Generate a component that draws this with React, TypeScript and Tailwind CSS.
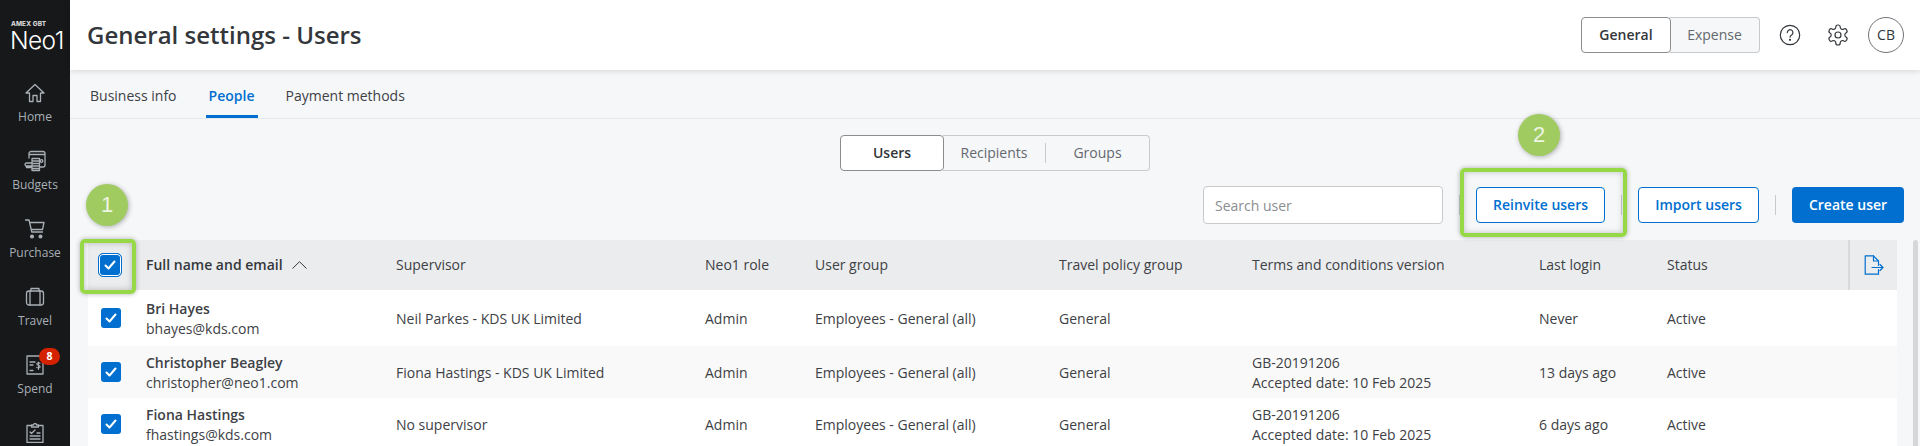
import React from "react";

function NavIcon({ name }: { name: string }) {
  const common = {
    fill: "none",
    stroke: "#a9afb5",
    strokeWidth: 1.3,
    strokeLinejoin: "round" as const,
    strokeLinecap: "round" as const,
  };
  if (name === "Home")
    return (
      <svg width="20" height="20" viewBox="0 0 20 20" {...common}>
        <path d="M1 10 10 1.500 19 10h-3.500v8.500h-3.500v-6h-4v6H4.500V10z" />
      </svg>
    );
  if (name === "Budgets")
    return (
      <svg width="22" height="22" viewBox="0 0 22 22" {...common}>
        <path d="M5 8V3.500a2 2 0 0 1 2-2h12a2 2 0 0 1 2 2V15a2 2 0 0 1-2 2h-3M5 4.500h16" />
        <circle cx="17.500" cy="11" r="1.300" />
        <path d="M8 8.500h7.500V20.500H8zM8 11h7.500M8 13.500h7.500M8 16h7.500M8 18.500h7.500M8 13H2.500a1.500 1.500 0 0 0 0 3H8M8 16H2.500a1.500 1.500 0 0 0 0 1.500H8" />
      </svg>
    );
  if (name === "Purchase")
    return (
      <svg width="20" height="20" viewBox="0 0 20 20" {...common}>
        <path d="M.5 1H4l2.800 12h10.700M4.600 3.500h14.400l-1.500 7H6.200" />
        <circle cx="7" cy="17.500" r="1.400" fill="#a9afb5" />
        <circle cx="15.500" cy="17.500" r="1.400" fill="#a9afb5" />
      </svg>
    );
  if (name === "Travel")
    return (
      <svg width="20" height="20" viewBox="0 0 20 20" {...common}>
        <rect x="1.500" y="4" width="17" height="14" rx="2.500" />
        <path d="M6 4V1.500h8V4M5 4v14M15 4v14" />
      </svg>
    );
  if (name === "Spend")
    return (
      <svg width="18" height="20" viewBox="0 0 18 20" {...common}>
        <path d="M1 1h16v18H1zM4 7h5M4 10h3" />
        <path d="M14 8.500c-.5-1-3.200-1-3.200.6 0 1.700 3.300.9 3.300 2.700 0 1.600-2.800 1.500-3.400.5M12.500 7v7.500" strokeWidth="1.100" />
        <path d="M4 15.500h3" />
      </svg>
    );
  return (
    <svg width="18" height="20" viewBox="0 0 18 20" {...common}>
      <path d="M5.500 2.500H1v17h16v-17h-4.500M5.500 4V2h2a1.500 1.500 0 0 1 3 0h2v2z" />
      <path d="M4 9l1.500 1.500L9 7M4 13h10M4 16h10M11 10h3" />
    </svg>
  );
}

const nav = ["Home", "Budgets", "Purchase", "Travel", "Spend", "Approvals"];

function Check({ focus = false }: { focus?: boolean }) {
  return (
    <span
      className={
        focus
          ? "flex h-[24px] w-[24px] items-center justify-center rounded-[5px] border border-[#006fcf] bg-[#006fcf] shadow-[inset_0_0_0_1px_#ffffff]"
          : "flex h-[20px] w-[20px] items-center justify-center rounded-[3px] bg-[#006fcf]"
      }
    >
      <svg width="12" height="10" viewBox="0 0 12 10" fill="none" stroke="#fff" strokeWidth="2" strokeLinecap="round" strokeLinejoin="round">
        <path d="M1.500 5.500 4.500 8.500 10.500 1.500" />
      </svg>
    </span>
  );
}

const cols =
  "grid grid-cols-[58px_250px_309px_110px_244px_193px_287px_128px_181px_49px] items-center";

const rows = [
  {
    name: "Bri Hayes",
    email: "bhayes@kds.com",
    sup: "Neil Parkes - KDS UK Limited",
    terms: null,
    login: "Never",
    h: "h-[56px] bg-white",
  },
  {
    name: "Christopher Beagley",
    email: "christopher@neo1.com",
    sup: "Fiona Hastings - KDS UK Limited",
    terms: "10 Feb 2025",
    login: "13 days ago",
    h: "h-[52px] bg-[#f9f9f9]",
  },
  {
    name: "Fiona Hastings",
    email: "fhastings@kds.com",
    sup: "No supervisor",
    terms: "10 Feb 2025",
    login: "6 days ago",
    h: "h-[52px] bg-white",
  },
];

export default function App() {
  return (
    <div className="relative flex h-[446px] w-[1920px] overflow-hidden bg-[#f6f7f9] font-['Open_Sans',sans-serif] text-[14px] leading-[20px] text-[#3d4145]">
      <aside className="flex w-[70px] shrink-0 flex-col items-center bg-[#16181a]">
        <div className="flex h-[70px] w-full shrink-0 flex-col pl-[10px] pt-[20px] font-['Inter',sans-serif] text-white">
          <span className="pl-px text-[6.500px] font-bold leading-[9px] tracking-[0.1px] text-[#e4e4e4]">AMEX GBT</span>
          <span className="mt-[-1px] text-[24.500px] font-light leading-[24px] tracking-[-0.6px]">Neo1</span>
        </div>
        <div className="shrink-0 pt-[12px]">
          {nav.map((n) => (
            <div key={n} className="relative flex h-[68px] w-[70px] flex-col items-center">
              <span className="flex h-[22px] items-center justify-center">
                <NavIcon name={n} />
              </span>
              <span className="mt-[5px] text-[12px] leading-[16px] text-[#a9afb5]">{n === "Approvals" ? "" : n}</span>
              {n === "Spend" && (
                <span className="absolute left-[39px] top-[-6px] flex h-[17px] w-[21px] items-center justify-center rounded-full bg-[#d42200] text-[10.500px] font-bold leading-none text-white">
                  8
                </span>
              )}
            </div>
          ))}
        </div>
      </aside>

      <main className="flex min-w-0 flex-1 flex-col">
        <header className="relative z-10 flex h-[70px] shrink-0 items-center justify-between bg-white pl-[17px] pr-[16px] shadow-[0_1px_6px_rgba(0,0,0,0.14)]">
          <h1 className="text-[24px] font-semibold leading-[32px] text-[#33373b]">General settings - Users</h1>
          <div className="flex items-center">
            <div className="flex h-[36px] text-[14px]">
              <span className="z-10 flex w-[90px] items-center justify-center rounded-[4px] border border-[#8a8d90] bg-white font-semibold text-[#33373b]">General</span>
              <span className="ml-[-1px] flex w-[90px] items-center justify-center rounded-r-[4px] border border-l-0 border-[#c8cacc] bg-[#f6f7f9] text-[#63686d]">Expense</span>
            </div>
            <svg className="ml-[19px]" width="22" height="22" viewBox="0 0 22 22" fill="none" stroke="#33373b" strokeWidth="1.200" strokeLinecap="round">
              <circle cx="11" cy="11" r="9.700" />
              <path d="M8.300 8.600a2.800 2.800 0 1 1 4.300 2.300c-1 .6-1.600 1.100-1.600 2.300" />
              <circle cx="11" cy="15.800" r=".5" fill="#33373b" />
            </svg>
            <svg className="ml-[25px]" width="24" height="24" viewBox="0 0 24 24" fill="none" stroke="#33373b" strokeWidth="1.200" strokeLinecap="round" strokeLinejoin="round">
              <path d="M12.220 2h-.44a2 2 0 0 0-2 2v.18a2 2 0 0 1-1 1.730l-.43.250a2 2 0 0 1-2 0l-.150-.08a2 2 0 0 0-2.730.730l-.220.380a2 2 0 0 0 .730 2.730l.150.100a2 2 0 0 1 1 1.720v.510a2 2 0 0 1-1 1.740l-.150.090a2 2 0 0 0-.730 2.730l.220.380a2 2 0 0 0 2.730.730l.150-.080a2 2 0 0 1 2 0l.430.250a2 2 0 0 1 1 1.730V20a2 2 0 0 0 2 2h.44a2 2 0 0 0 2-2v-.18a2 2 0 0 1 1-1.730l.430-.250a2 2 0 0 1 2 0l.150.080a2 2 0 0 0 2.730-.730l.220-.390a2 2 0 0 0-.730-2.730l-.150-.080a2 2 0 0 1-1-1.740v-.500a2 2 0 0 1 1-1.740l.150-.090a2 2 0 0 0 .730-2.730l-.220-.380a2 2 0 0 0-2.730-.730l-.150.080a2 2 0 0 1-2 0l-.430-.250a2 2 0 0 1-1-1.730V4a2 2 0 0 0-2-2z" />
              <circle cx="12" cy="12" r="3" />
            </svg>
            <span className="ml-[18px] flex h-[36px] w-[36px] items-center justify-center rounded-full border border-[#6e7378] font-medium text-[#33373b]">CB</span>
          </div>
        </header>

        <nav className="flex h-[49px] shrink-0 items-end gap-[25px] border-b border-[#e6e8eb] pl-[16px]">
          <span className="flex h-[45px] items-center px-[4px]">Business info</span>
          <span className="flex h-[45px] w-[52px] items-center justify-center border-b-[3px] border-[#006fcf] pt-[3px] font-semibold text-[#006fcf]">People</span>
          <span className="ml-[-1px] flex h-[45px] items-center px-[4px]">Payment methods</span>
        </nav>

        <div className="flex shrink-0 justify-center pt-[16px]">
          <div className="flex h-[36px] rounded-[4px] text-[14px]">
            <span className="z-10 flex w-[104px] items-center justify-center rounded-[4px] border border-[#8a8d90] bg-white font-semibold text-[#33373b]">Users</span>
            <div className="ml-[-1px] flex items-center rounded-r-[4px] border border-l-0 border-[#c8cacc] text-[#63686d]">
              <span className="flex h-[20px] w-[103px] items-center justify-center border-r border-[#c8cacc]">Recipients</span>
              <span className="flex w-[103px] items-center justify-center">Groups</span>
            </div>
          </div>
        </div>

        <div className="mt-[15px] flex h-[38px] shrink-0 items-center justify-end pr-[16px]">
          <input
            readOnly
            placeholder="Search user"
            className="h-[38px] w-[240px] rounded-[4px] border border-[#c8cacc] bg-white px-[11px] text-[14px] outline-none placeholder:text-[#8a8d90]"
          />
          <span className="mx-[16px] h-[20px] w-px bg-[#c8cacc]" />
          <button className="h-[36px] w-[129px] rounded-[4px] border border-[#006fcf] bg-white font-semibold text-[#006fcf]">Reinvite users</button>
          <span className="mx-[16px] h-[20px] w-px bg-[#c8cacc]" />
          <button className="h-[36px] w-[121px] rounded-[4px] border border-[#006fcf] bg-white font-semibold text-[#006fcf]">Import users</button>
          <span className="mx-[16px] h-[20px] w-px bg-[#c8cacc]" />
          <button className="h-[36px] w-[112px] rounded-[4px] bg-[#006fcf] font-semibold text-white">Create user</button>
        </div>

        <div className="mt-[16px] flex min-h-0 flex-1 pl-[18px]">
          <div className="w-[1809px] shrink-0">
            <div className={`${cols} h-[50px] bg-[#ebecee]`}>
              <span className="flex pl-[10px]">
                <Check focus />
              </span>
              <span className="flex items-center font-semibold text-[#33373b]">
                Full name and email
                <svg className="ml-[9px]" width="15" height="8" viewBox="0 0 15 8" fill="none" stroke="#33373b" strokeWidth="1">
                  <path d="M.5 7.500 7.500.7l7 6.800" />
                </svg>
              </span>
              <span>Supervisor</span>
              <span>Neo1 role</span>
              <span>User group</span>
              <span>Travel policy group</span>
              <span>Terms and conditions version</span>
              <span>Last login</span>
              <span>Status</span>
              <span className="flex h-[50px] items-center border-l-2 border-[#d7d9db] pl-[14px]">
                <svg width="20" height="20" viewBox="0 0 20 20" fill="none" stroke="#006fcf" strokeWidth="1.200" strokeLinejoin="round" strokeLinecap="round">
                  <path d="M14.500 10.500V6L9.500.8H1.200v18.400h13.300V14.500" />
                  <path d="M9.500.8V6h5M8 12.500h11M16 9.500l3 3-3 3" />
                </svg>
              </span>
            </div>
            {rows.map((r) => (
              <div key={r.name} className={`${cols} ${r.h} pt-[2px]`}>
                <span className="mt-[-2px] flex pl-[13px]">
                  <Check />
                </span>
                <span className="flex flex-col">
                  <span className="font-semibold text-[#3d4145]">{r.name}</span>
                  <span>{r.email}</span>
                </span>
                <span>{r.sup}</span>
                <span>Admin</span>
                <span>Employees - General (all)</span>
                <span>General</span>
                <span className="flex flex-col">
                  {r.terms && (
                    <>
                      <span>GB-20191206</span>
                      <span>Accepted date: {r.terms}</span>
                    </>
                  )}
                </span>
                <span>{r.login}</span>
                <span>Active</span>
                <span />
              </div>
            ))}
          </div>
          <div className="flex w-[23px] shrink-0 justify-end pr-[2px]">
            <div className="h-full w-[5px] rounded-t-[3px] bg-[#d5d7d9]" />
          </div>
        </div>
      </main>

      {/* Tutorial annotations lying over the page */}
      <div className="pointer-events-none absolute left-[80px] top-[239px] h-[55px] w-[56px] rounded-[5px] border-[4px] border-[#97d846] shadow-[0_0_5px_rgba(0,0,0,0.3),inset_0_0_6px_rgba(0,0,0,0.22)]" />
      <div className="pointer-events-none absolute left-[1460px] top-[168px] h-[69px] w-[167px] rounded-[5px] border-[4px] border-[#97d846] shadow-[0_0_5px_rgba(0,0,0,0.3),inset_0_0_6px_rgba(0,0,0,0.22)]" />
      <div className="pointer-events-none absolute left-[86px] top-[184px] flex h-[42px] w-[42px] items-center justify-center rounded-full bg-[#9fcb60] font-['Liberation_Sans',sans-serif] text-[22px] text-[#eef5e4] shadow-[1px_1px_5px_rgba(0,0,0,0.3)]">1</div>
      <div className="pointer-events-none absolute left-[1518px] top-[114px] flex h-[42px] w-[42px] items-center justify-center rounded-full bg-[#9fcb60] font-['Liberation_Sans',sans-serif] text-[22px] text-[#eef5e4] shadow-[1px_1px_5px_rgba(0,0,0,0.3)]">2</div>
    </div>
  );
}
